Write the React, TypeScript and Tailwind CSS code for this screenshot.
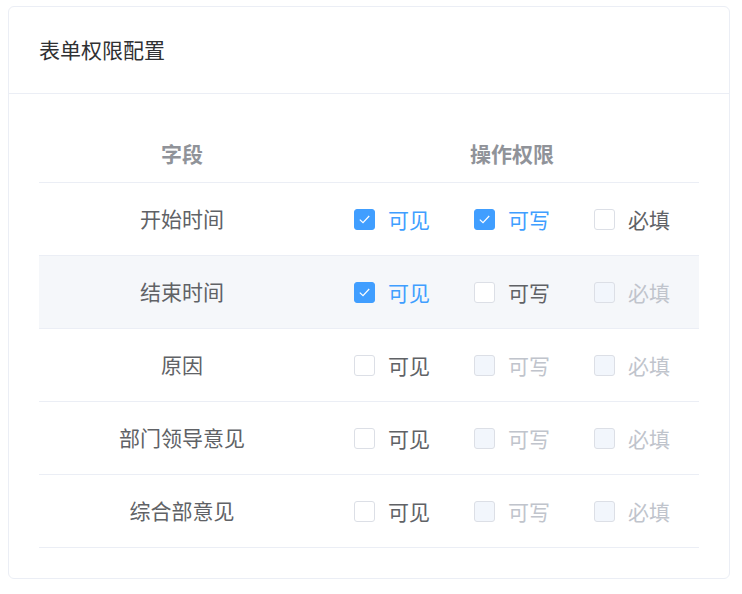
import React from "react";

type State = "checked" | "unchecked" | "disabled";

const rows: { name: string; perms: [State, State, State] }[] = [
  { name: "开始时间", perms: ["checked", "checked", "unchecked"] },
  { name: "结束时间", perms: ["checked", "unchecked", "disabled"] },
  { name: "原因", perms: ["unchecked", "disabled", "disabled"] },
  { name: "部门领导意见", perms: ["unchecked", "disabled", "disabled"] },
  { name: "综合部意见", perms: ["unchecked", "disabled", "disabled"] },
];

const labels = ["可见", "可写", "必填"];

function Checkbox({ state, label }: { state: State; label: string }) {
  const box =
    state === "checked"
      ? "border-[#409EFF] bg-[#409EFF]"
      : state === "disabled"
        ? "border-[#DCDFE6] bg-[#F2F6FC]"
        : "border-[#DCDFE6] bg-white";
  const text =
    state === "checked"
      ? "text-[#409EFF]"
      : state === "disabled"
        ? "text-[#C0C4CC]"
        : "text-[#606266]";
  return (
    <div className="flex w-[120px] items-center last:w-auto">
      <span
        className={`flex h-[21px] w-[21px] items-center justify-center rounded-[3px] border ${box}`}
      >
        {state === "checked" && (
          <svg width="13" height="11" viewBox="0 0 13 11" fill="none">
            <path d="M1.8 5.6 5 8.7 11.2 2" stroke="white" strokeWidth="1.2" />
          </svg>
        )}
      </span>
      <span className={`ml-[13px] text-[21px] leading-none ${text}`}>{label}</span>
    </div>
  );
}

export default function App() {
  return (
    <div
      className="bg-white pl-[8px] pr-[12px] pt-[6px]"
      style={{ fontFamily: '"Noto Sans CJK SC", "Noto Sans", sans-serif' }}
    >
      <div className="h-[573px] rounded-[6px] border border-[#EBEEF5] bg-white">
        <div className="flex h-[87px] items-center border-b border-[#EBEEF5] px-[30px] text-[21px] text-[#303133]">
          表单权限配置
        </div>
        <div className="px-[30px] pt-[31px]">
          <div className="flex h-[58px] items-center border-b border-[#EBEEF5] text-[21px] font-bold text-[#909399]">
            <div className="w-[286px] text-center">字段</div>
            <div className="flex-1 text-center">操作权限</div>
          </div>
          {rows.map((row, i) => (
            <div
              key={row.name}
              className={`flex h-[73px] items-center border-b border-[#EBEEF5] ${i === 1 ? "bg-[#F5F7FA]" : ""}`}
            >
              <div className="w-[286px] text-center text-[21px] text-[#606266]">{row.name}</div>
              <div className="flex flex-1 justify-center">
                {row.perms.map((p, j) => (
                  <Checkbox key={j} state={p} label={labels[j]} />
                ))}
              </div>
            </div>
          ))}
        </div>
      </div>
    </div>
  );
}
